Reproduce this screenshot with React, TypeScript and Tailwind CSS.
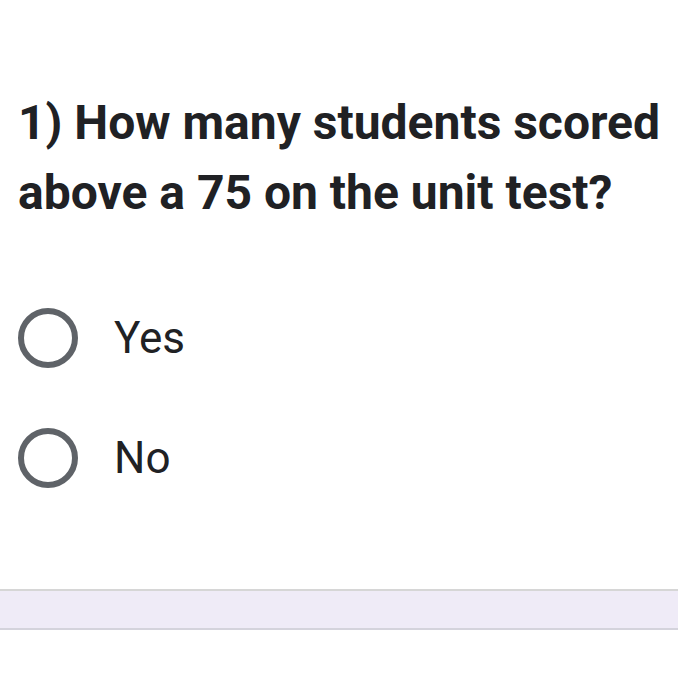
export default function App() {
  const options = ["Yes", "No"];
  return (
    <div className="h-[678px] w-[678px] overflow-hidden bg-white font-['Roboto',sans-serif]">
      <div className="pl-[18px] pt-[88px]">
        <h1 className="whitespace-nowrap text-[48px] font-bold leading-[70px] text-[#202124]">
          1) How many students scored
          <br />
          above a 75 on the unit test?
        </h1>
      </div>
      <div className="mt-[80px] flex flex-col gap-[60px] px-[18px]">
        {options.map((o) => (
          <label key={o} className="flex h-[60px] items-center gap-[36px]">
            <span className="box-border h-[60px] w-[60px] shrink-0 rounded-full border-[6px] border-[#5f6368]" />
            <span className="text-[44px] leading-none text-[#202124]">{o}</span>
          </label>
        ))}
      </div>
      <div className="mt-[101px] h-[41px] border-y-2 border-t-[#d6d6d6] border-b-[#d4d3dc] bg-[#efebf7]" />
    </div>
  );
}
